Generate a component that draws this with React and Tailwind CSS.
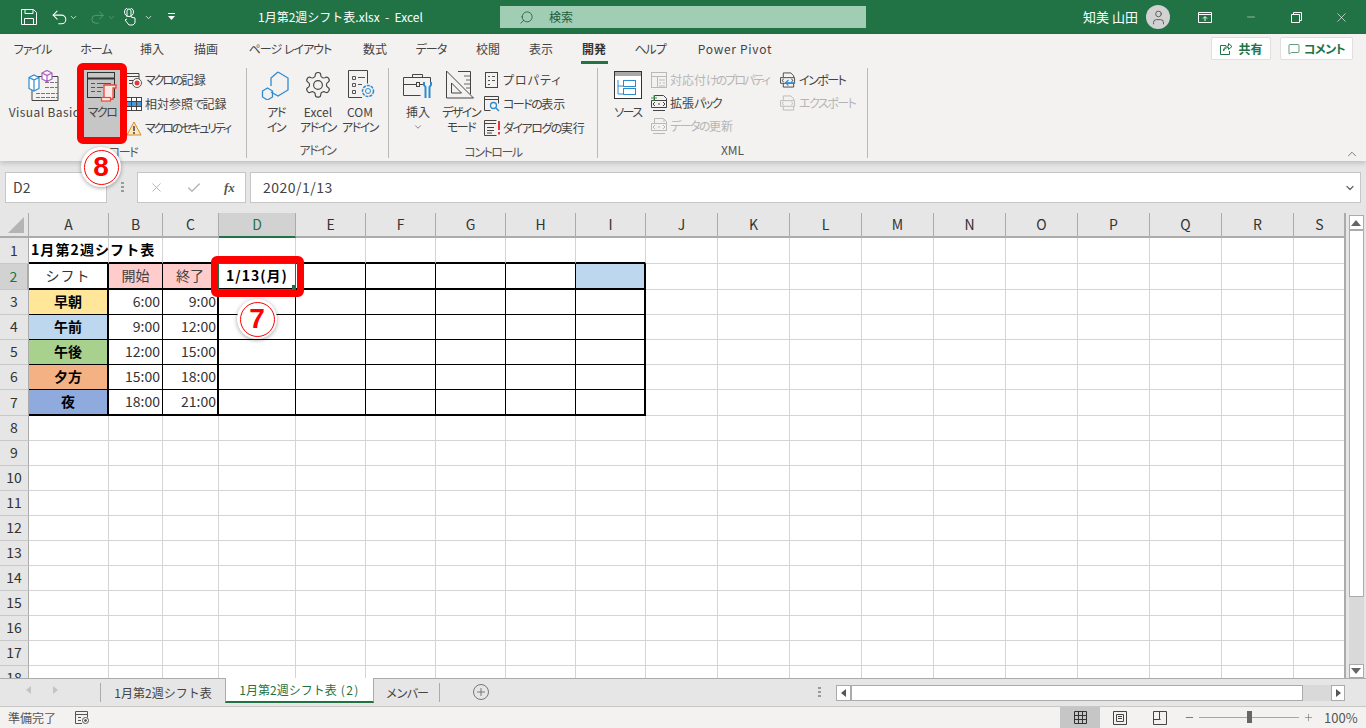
import React from 'react';
import {
  Undo2, Redo2, ChevronDown, ChevronUp, Search, X, Minus, Check, MessageSquare, Plus, User,
} from 'lucide-react';

const jp = "font-['Noto_Sans_CJK_JP','Liberation_Sans',sans-serif]";
const palt = '[font-feature-settings:"palt"]';

const tabs = [
  ['ファイル', 65], ['ホーム', 62], ['挿入', 50], ['描画', 58], ['ページ レイアウト', 110], ['数式', 60],
  ['データ', 52], ['校閲', 62], ['表示', 44], ['開発', 62], ['ヘルプ', 50], ['Power Pivot', 120],
];

const colWidths = [80, 54, 56, 77, 70, 70, 70, 70, 70, 72, 72, 72, 72, 72, 72, 72, 72, 72, 52];
const colNames = 'ABCDEFGHIJKLMNOPQRS'.split('');
const rowHeights = [26, 26, 25, 25, 25, 25, 26, 25, 25, 25, 25, 25, 25, 25, 25, 25, 25, 25];

const timeB = 'justify-end pr-[2px] text-[#333]';
const timeC = 'justify-end pr-px text-[#333]';

const rows = {
  1: { 0: { t: '1月第2週シフト表', cls: 'font-bold tracking-[1.1px] pl-[2px]' } },
  2: {
    0: { t: 'シフト', cls: 'justify-center text-[#333] tracking-[1px]' },
    1: { t: '開始', cls: 'justify-center bg-[#ffcccc] text-[#444]' },
    2: { t: '終了', cls: 'justify-center bg-[#ffcccc] text-[#444]' },
    3: { t: '1/13(月)', cls: 'justify-center font-bold tracking-[1px]' },
    8: { t: '', cls: 'bg-[#bdd7ee]' },
  },
  3: {
    0: { t: '早朝', cls: 'justify-center font-bold bg-[#ffe699]' },
    1: { t: '6:00', cls: timeB },
    2: { t: '9:00', cls: timeC },
  },
  4: {
    0: { t: '午前', cls: 'justify-center font-bold bg-[#bdd7ee]' },
    1: { t: '9:00', cls: timeB },
    2: { t: '12:00', cls: timeC },
  },
  5: {
    0: { t: '午後', cls: 'justify-center font-bold bg-[#a9d18e]' },
    1: { t: '12:00', cls: timeB },
    2: { t: '15:00', cls: timeC },
  },
  6: {
    0: { t: '夕方', cls: 'justify-center font-bold bg-[#f4b183]' },
    1: { t: '15:00', cls: timeB },
    2: { t: '18:00', cls: timeC },
  },
  7: {
    0: { t: '夜', cls: 'justify-center font-bold bg-[#8faadc]' },
    1: { t: '18:00', cls: timeB },
    2: { t: '21:00', cls: timeC },
  },
};

// borders of the table A2:I7, thick on the outside and round the header
const cellBorders = (r, c) => {
  const inTable = c <= 8;
  let right = 'border-r border-r-[#d4d4d4]';
  let bottom = 'border-b border-b-[#d4d4d4]';
  if (inTable && r >= 2 && r <= 7) {
    right = c === 0 || c === 2 || c === 8 ? 'border-r-2 border-r-black' : 'border-r border-r-black';
  }
  if (inTable && (r === 1 || r === 2 || r === 7)) bottom = 'border-b-2 border-b-black';
  else if (inTable && r >= 3 && r <= 6) bottom = 'border-b border-b-black';
  return `${right} ${bottom}`;
};

// the kana of the original UI font is narrower than Noto's
const Kana = ({ text, cls = 'tracking-[-1.5px]' }) => (
  <span>
    {text.split(/([\u3040-\u30ff]+)/).map((part, i) =>
      /[\u3040-\u30ff]/.test(part) ? <span key={i} className={cls}>{part}</span> : part,
    )}
  </span>
);

const IconVB = () => (
  <svg width="32" height="32" viewBox="0 0 32 32" fill="none">
    <path d="M9 6.500h21v24H4V19" stroke="#444" />
    <path d="M17 12.500h13M17 17.500h13M8 23.500h22M8 27.500h22" stroke="#777" strokeDasharray="4 1" />
    <path d="M1 7.500l5-2.500 5 2.500v11l-5 2.500-5-2.500zM1 7.500l5 2.500 5-2.500M6 10v10" fill="#fff" stroke="#2e8bd0" strokeWidth="1.2" />
    <path d="M14 3l5-2.500 5 2.500v6l-5 2.500-5-2.500zM14 3l5 2.500 5-2.500M19 5.500v6" fill="#fff" stroke="#a95bc0" strokeWidth="1.2" />
  </svg>
);

const IconMacro = () => (
  <svg width="31" height="30" viewBox="0 0 31 30" fill="none">
    <rect x="0.500" y="0.500" width="27" height="25" stroke="#333" />
    <path d="M1 6.500h27" stroke="#333" strokeWidth="2" />
    <path d="M4 11.500h4M10 11.500h14M4 15.500h4M10 15.500h6M4 19.500h4M10 19.500h4" stroke="#555" />
    <path d="M17 13h12v3h-3v11H17z" fill="#fbe9e7" stroke="#e8483b" strokeWidth="1.300" />
    <rect x="14.500" y="25.500" width="9" height="3.500" fill="#fbe9e7" stroke="#e8483b" strokeWidth="1.200" />
  </svg>
);

const IconRecord = () => (
  <svg width="16" height="16" viewBox="0 0 16 16" fill="none">
    <path d="M0 1.500h13v6M0 4.500h13M3 8.500h4M3 11.500h3" stroke="#444" />
    <circle cx="11" cy="11" r="4.500" fill="#fff" stroke="#555" />
    <circle cx="11" cy="11" r="2.500" fill="#e5383b" />
  </svg>
);

const IconRelative = () => (
  <svg width="16" height="14" viewBox="0 0 16 14" fill="none">
    <rect x="0.500" y="0.500" width="15" height="13" fill="#fff" stroke="#444" />
    <rect x="1" y="5" width="14" height="4" fill="#4a9bdc" />
    <path d="M5.500 0v14M10.500 0v14M0 4.500h16M0 9.500h16" stroke="#444" />
  </svg>
);

const IconWarn = () => (
  <svg width="16" height="15" viewBox="0 0 16 15">
    <path d="M8 1l7 13H1z" fill="#fce8bf" stroke="#d98c2b" />
    <path d="M8 5v5M8 11v2" stroke="#333" strokeWidth="1.400" />
  </svg>
);

const IconAddin = () => (
  <svg width="30" height="30" viewBox="0 0 30 30" fill="none" stroke="#2e8bd0" strokeWidth="1.300">
    <path d="M17 2l10 6v12l-10 6-7-4M10 16V8l7-6" />
    <path d="M6.500 18l5 3v6l-5 3-5-3v-6z" />
  </svg>
);

const IconGear = () => (
  <svg width="30" height="30" viewBox="0 0 24 24" fill="none" stroke="#444" strokeWidth="0.900">
    <path d="M12.200 2h-.400a2 2 0 0 0-2 2v.200a2 2 0 0 1-1 1.700l-.400.200a2 2 0 0 1-2 0l-.200-.100a2 2 0 0 0-2.700.700l-.200.400a2 2 0 0 0 .700 2.700l.200.100a2 2 0 0 1 1 1.700v.500a2 2 0 0 1-1 1.700l-.200.100a2 2 0 0 0-.700 2.700l.200.400a2 2 0 0 0 2.700.700l.200-.100a2 2 0 0 1 2 0l.400.200a2 2 0 0 1 1 1.700v.200a2 2 0 0 0 2 2h.400a2 2 0 0 0 2-2v-.200a2 2 0 0 1 1-1.700l.400-.200a2 2 0 0 1 2 0l.200.100a2 2 0 0 0 2.700-.700l.200-.400a2 2 0 0 0-.700-2.700l-.200-.100a2 2 0 0 1-1-1.700v-.500a2 2 0 0 1 1-1.700l.200-.100a2 2 0 0 0 .700-2.700l-.200-.400a2 2 0 0 0-2.700-.700l-.200.100a2 2 0 0 1-2 0l-.400-.200a2 2 0 0 1-1-1.700V4a2 2 0 0 0-2-2z" />
    <circle cx="12" cy="12" r="3.500" />
  </svg>
);

const IconCom = () => (
  <svg width="30" height="30" viewBox="0 0 30 30" fill="none" className="ml-[3px]">
    <path d="M15 27.500H1.500V0.500h19v13" stroke="#444" />
    <path d="M5.500 6.500h3v3h-3zM5.500 13.500h3v3h-3zM5.500 20.500h3v3h-3zM11 7.500h7M11 14.500h4" stroke="#555" />
    <circle cx="21" cy="21" r="5.500" stroke="#2e8bd0" strokeWidth="1.500" strokeDasharray="3 1" />
    <circle cx="21" cy="21" r="2.500" stroke="#2e8bd0" />
  </svg>
);

const IconInsert = () => (
  <svg width="30" height="30" viewBox="0 0 30 30" fill="none">
    <path d="M0.500 7.500h27v6M0.500 7.500v18h17M0.500 14.500h13M17 14.500h5M9.500 7.500v-3h10v3" stroke="#444" />
    <rect x="13.500" y="12.500" width="3" height="4" stroke="#444" />
    <path d="M21 11v3l1.500 2v11M28 11v3l-1.500 2v11" stroke="#2e8bd0" strokeWidth="2" transform="translate(0 1)" />
  </svg>
);

const IconDesign = () => (
  <svg width="30" height="30" viewBox="0 0 30 30" fill="none" stroke="#444">
    <path d="M0.500 1l27 27H0.500z" />
    <path d="M5.500 13l10 10h-10z" />
    <path d="M12 1.500h12.500V24" />
    <path d="M18 6h6M20 10h4M18 14h6M20 18h4" stroke="#666" />
  </svg>
);

const IconProp = () => (
  <svg width="14" height="16" viewBox="0 0 14 16" fill="none" stroke="#555">
    <rect x="0.500" y="0.500" width="12" height="15" stroke="#444" />
    <path d="M3 4.500h2M7 4.500h3M3 8.500h2M7 8.500h3M3 12.500h2" />
  </svg>
);

const IconCode = () => (
  <svg width="16" height="16" viewBox="0 0 16 16" fill="none">
    <path d="M0.500 14.500v-14h14v7M0 3.500h15M0.500 14.500h6" stroke="#444" />
    <circle cx="9.500" cy="9.500" r="3" stroke="#2e8bd0" strokeWidth="1.300" />
    <path d="M12 12l3 3" stroke="#2e8bd0" strokeWidth="1.500" />
  </svg>
);

const IconDialog = () => (
  <svg width="16" height="16" viewBox="0 0 16 16" fill="none">
    <path d="M12.500 15.500H0.500v-15h12M0 3.500h12M3 7.500h7M3 10.500h7M3 13h5" stroke="#444" />
    <path d="M15 1v9M15 12v2.500" stroke="#e5383b" strokeWidth="2" />
  </svg>
);

const IconSource = () => (
  <svg width="28" height="28" viewBox="0 0 28 28" fill="none">
    <rect x="0.500" y="0.500" width="27" height="27" fill="#fff" stroke="#333" />
    <rect x="1" y="1" width="26" height="4" fill="#a8a8a8" />
    <path d="M4 9v14h5M4 15h5" stroke="#2e8bd0" />
    <rect x="9.500" y="9.500" width="12" height="6" stroke="#2e8bd0" />
    <rect x="9.500" y="17.500" width="12" height="6" stroke="#2e8bd0" />
  </svg>
);

const IconMapProp = () => (
  <svg width="16" height="16" viewBox="0 0 16 16" fill="none" stroke="#b9b9b9">
    <rect x="0.500" y="0.500" width="15" height="15" />
    <path d="M0 4.500h16M6.500 5v11M8 8h6M8 11h2M12 11h2M8 14h6" />
  </svg>
);

const IconPack = ({ color = '#444', plus = false, alert = false }) => (
  <svg width="16" height="16" viewBox="0 0 16 16" fill="none" stroke={color}>
    <path d="M3.500 5V0.500h9l3 3v9M0.500 5.500h15v7h-15zM2 15.500h12" />
    <path d="M4 7l-2 2 2 2M12 7l2 2-2 2M7 9h2" />
    {plus && <path d="M3 0v6M0 3h6" stroke="#2f9e44" />}
    {alert && <path d="M13 1v3" />}
  </svg>
);

const IconImport = ({ color = '#444', arrow = false }) => (
  <svg width="17" height="16" viewBox="0 0 17 16" fill="none" stroke={color}>
    <path d="M3.500 5V0.500h8l3 3V5M0.500 5.500h15v6h-15zM3.500 11.500v4h11v-4" />
    <path d="M4 7l-2 1.500L4 10M12 7l2 1.500L12 10" />
    {arrow && <path d="M16 11H6M9 8l-3 3 3 3" stroke="#2e8bd0" strokeWidth="1.300" />}
  </svg>
);

const LargeButton = ({ icon, lines, width, iconTop = 2, className = '', labelCls = '', chevron = false }) => (
  <div className={`flex flex-col items-center shrink-0 ${className}`} style={{ width }}>
    <div className="h-[36px] flex items-start justify-center" style={{ paddingTop: iconTop }}>{icon}</div>
    <div className={`text-center text-[12px] leading-[15px] text-[#444] whitespace-nowrap ${labelCls}`}>
      {lines.map((l) => <div key={l}><Kana text={l} /></div>)}
    </div>
    {chevron && <ChevronDown size={10} strokeWidth={1.5} className="text-[#444] mt-[3px]" />}
  </div>
);

const SmallButton = ({ icon, label, gray, kana, h = 'h-[24px]' }) => (
  <div className={`${h} flex items-center gap-[3px] whitespace-nowrap text-[12px] ${gray ? 'text-[#b5b5b5]' : 'text-[#444]'}`}>
    <span className="w-[16px] flex justify-center shrink-0">{icon}</span>
    {typeof label === 'string' ? <Kana text={label} cls={kana} /> : label}
  </div>
);

const Group = ({ label, width, children }) => (
  <div className="flex flex-col shrink-0 border-r border-r-[#b9b9b9] h-[90px] mt-[4px]" style={{ width }}>
    <div className="flex h-[76px]">{children}</div>
    <div className="text-center text-[12px] leading-[16px] text-[#555] mt-[4px]"><Kana text={label} /></div>
  </div>
);

const Ann = ({ n, cls }) => (
  <div className={`absolute z-30 w-[40px] h-[40px] rounded-full bg-white shadow-[0_1px_4px_rgba(0,0,0,0.35)] flex items-center justify-center ${cls}`}>
    <div className="w-[35px] h-[35px] rounded-full border border-[#ff0000] flex items-center justify-center text-[#ff0000] font-black text-[28px] font-['Liberation_Sans',sans-serif]">
      {n}
    </div>
  </div>
);

const ScrollArrow = ({ dir }) => (
  <svg width="10" height="6" viewBox="0 0 10 6">
    <path d={dir === 'up' ? 'M5 0l5 6H0z' : 'M5 6L0 0h10z'} fill="#666" />
  </svg>
);

export default function App() {
  return (
    <div className={`relative w-[1366px] h-[728px] overflow-hidden bg-[#e6e6e6] flex flex-col ${jp}`}>
      {/* title bar */}
      <div className="h-[34px] bg-[#217346] flex items-center text-white shrink-0">
        <div className="w-[500px] flex items-center shrink-0 relative">
          <div className="flex items-center pl-[21px] w-[258px]">
            <svg width="16" height="16" viewBox="0 0 16 16" fill="none" stroke="#fff">
              <path d="M0.500 0.500h12l3 3v12H0.500zM4 0.500v4h8v-4M3.500 15.500v-6h9v6" />
            </svg>
            <Undo2 size={19} strokeWidth={1.3} className="ml-[13px]" />
            <ChevronDown size={9} />
            <Redo2 size={17} strokeWidth={1.3} className="ml-[11px] text-[#5d9c7c]" />
            <ChevronDown size={9} className="ml-[1px] text-[#5d9c7c]" />
            <svg width="14" height="18" viewBox="0 0 14 18" fill="none" stroke="#fff" className="ml-[7px]">
              <path d="M4 9V3a2 2 0 0 1 4 0v6l4 1v5l-2 2H6L2 12l2-1" />
              <circle cx="6" cy="4" r="4.500" />
            </svg>
            <ChevronDown size={9} className="ml-[7px]" />
            <svg width="9" height="8" viewBox="0 0 9 8" className="ml-[14px]" fill="#fff">
              <path d="M1 0h7v1H1zM1 3h7L4.500 7z" />
            </svg>
          </div>
          <div className="text-[12px] whitespace-nowrap">1月第2週シフト表.xlsx&nbsp; -&nbsp; Excel</div>
        </div>
        <div className="w-[366px] h-[22px] bg-[#a0cdb4] flex items-center text-[#1f5c3a] text-[12px] shrink-0">
          <Search size={15} strokeWidth={1.3} className="ml-[19px] -scale-x-100" />
          <span className="ml-[15px]">検索</span>
        </div>
        <div className="flex-1 flex items-center pl-[217px]">
          <span className="text-[13px] whitespace-nowrap w-[63px]">知美 山田</span>
          <div className="w-[24px] h-[24px] rounded-full bg-[#d2d2d2] flex items-center justify-center">
            <User size={17} strokeWidth={1.3} className="text-[#555]" />
          </div>
          <svg width="14" height="11" viewBox="0 0 14 11" fill="none" stroke="#fff" className="ml-[28px]">
            <path d="M0.500 0.500h13v10h-13zM0 2.500h14M7 9V5M5 6.500l2-2 2 2" />
          </svg>
          <Minus size={12} strokeWidth={1} className="ml-[33px]" />
          <svg width="11" height="11" viewBox="0 0 11 11" fill="none" stroke="#fff" className="ml-[34px]">
            <path d="M0.500 2.500h8v8h-8zM2.500 2.500v-2h8v8h-2" />
          </svg>
          <X size={15} strokeWidth={1} className="ml-[32px]" />
        </div>
      </div>

      {/* ribbon */}
      <div className={`h-[127px] bg-[#f3f2f1] shrink-0 shadow-[0_2px_5px_rgba(0,0,0,0.18)] z-10 relative ${palt}`}>
        <div className="h-[30px] flex items-center">
          {tabs.map(([name, w]) => (
            <div
              key={name}
              className={`h-[30px] flex items-center justify-center text-[12px] whitespace-nowrap relative shrink-0 ${name === '開発' ? 'font-bold text-[#333]' : 'text-[#444]'} ${name === 'Power Pivot' ? 'tracking-[0.7px]' : ''}`}
              style={{ width: w }}
            >
              <Kana text={name} cls="tracking-[-1px]" />
              {name === '開発' && <span className="absolute bottom-0 left-[18px] w-[27px] h-[3px] bg-[#217346]" />}
            </div>
          ))}
          <div className="ml-auto flex items-center gap-[9px] pr-[13px] -mt-[1px]">
            <div className="w-[60px] h-[23px] bg-white border border-[#e1dfdd] rounded-[2px] flex items-center justify-center gap-[5px] text-[#217346] text-[12px] font-bold">
              <svg width="14" height="14" viewBox="0 0 14 14" fill="none" stroke="#217346">
                <path d="M7 3.500H1.500v9h9V9" />
                <path d="M4.500 9c0-3 2-5 5-5V1.500l3.500 3-3.500 3V5.500c-2 0-4 1-5 3.500z" />
              </svg>
              共有
            </div>
            <div className="w-[73px] h-[23px] bg-white border border-[#e1dfdd] rounded-[2px] flex items-center justify-center gap-[4px] text-[#217346] text-[12px] font-bold">
              <MessageSquare size={12} strokeWidth={1.4} /><Kana text="コメント" cls="tracking-[-0.5px]" />
            </div>
          </div>
        </div>
        <div className="flex">
          <Group label="コード" width={247}>
            <LargeButton icon={<IconVB />} lines={['Visual Basic']} width={78} className="ml-[5px]" labelCls="tracking-[0.4px]" />
            <div className="w-[36px] h-[70px] bg-[#c6c6c6] ml-[1px] shrink-0">
              <LargeButton icon={<IconMacro />} lines={['マクロ']} width={36} iconTop={4} />
            </div>
            <div className="ml-[6px]">
              <SmallButton icon={<IconRecord />} label="マクロの記録" kana="tracking-[-2px]" />
              <SmallButton icon={<IconRelative />} label="相対参照で記録" />
              <SmallButton icon={<IconWarn />} label="マクロのセキュリティ" kana="tracking-[-2.200px]" />
            </div>
          </Group>
          <Group label="アドイン" width={142}>
            <LargeButton icon={<IconAddin />} lines={['アド', 'イン']} width={42} className="ml-[8px]" />
            <LargeButton icon={<IconGear />} lines={['Excel', 'アドイン']} width={42} />
            <LargeButton icon={<IconCom />} lines={['COM', 'アドイン']} width={42} />
          </Group>
          <Group label="コントロール" width={209}>
            <LargeButton icon={<IconInsert />} lines={['挿入']} width={44} className="ml-[7px]" chevron />
            <LargeButton icon={<IconDesign />} lines={['デザイン', 'モード']} width={42} />
            <div className="ml-[2px]">
              <SmallButton icon={<IconProp />} label={<span className="tracking-[1px]">プロパティ</span>} />
              <SmallButton icon={<IconCode />} label="コードの表示" />
              <SmallButton icon={<IconDialog />} label="ダイアログの実行" />
            </div>
          </Group>
          <Group label="XML" width={270}>
            <LargeButton icon={<IconSource />} lines={['ソース']} width={44} className="ml-[8px]" iconTop={3} />
            <div className="ml-[1px] w-[129px]">
              <SmallButton h="h-[23px]" gray icon={<IconMapProp />} label="対応付けのプロパティ" kana="tracking-[-2px]" />
              <SmallButton h="h-[23px]" icon={<IconPack plus />} label="拡張パック" />
              <SmallButton h="h-[23px]" gray icon={<IconPack color="#b9b9b9" alert />} label="データの更新" />
            </div>
            <div>
              <SmallButton h="h-[23px]" icon={<IconImport arrow />} label="インポート" />
              <SmallButton h="h-[23px]" gray icon={<IconImport color="#b9b9b9" />} label="エクスポート" />
            </div>
          </Group>
        </div>
        <ChevronUp size={14} strokeWidth={1.3} className="absolute right-[7px] bottom-0 text-[#555]" />
      </div>

      {/* formula bar */}
      <div className="h-[52px] shrink-0 flex items-center pl-[5px] pr-[5px] pt-[1px]">
        <div className="w-[102px] h-[31px] bg-white border border-[#c6c6c6] flex items-center pl-[7px] text-[14px] text-[#444]">D2</div>
        <div className="w-[30px] flex justify-center">
          <svg width="3" height="11" viewBox="0 0 3 11" fill="#999"><path d="M0 0h3v2H0zM0 4h3v2H0zM0 8h3v2H0z" /></svg>
        </div>
        <div className="w-[109px] h-[31px] bg-white border border-[#c6c6c6] flex items-center text-[#b4b4b4]">
          <X size={15} strokeWidth={1.5} className="ml-[11px]" />
          <Check size={16} strokeWidth={2} className="ml-[22px]" />
          <span className="ml-[22px] text-[13px] italic font-bold text-[#555] font-['Liberation_Serif',serif]">fx</span>
        </div>
        <div className="ml-[4px] flex-1 h-[31px] bg-white border border-[#c6c6c6] flex items-center pl-[12px] pr-[4px] text-[14px] text-[#444]">
          <span className="flex-1 tracking-[0.5px]">2020/1/13</span>
          <ChevronDown size={12} strokeWidth={2.5} className="text-[#666]" />
        </div>
      </div>

      {/* sheet */}
      <div className="flex-1 min-h-0 flex text-[14px] text-black">
        <div className="w-[1346px] shrink-0 border-r-2 border-r-[#ababab] overflow-hidden">
          <div className="h-[25px] flex border-b-2 border-b-[#ababab]">
            <div className="w-[29px] shrink-0 border-r border-r-[#ababab] relative">
              <svg width="18" height="18" viewBox="0 0 18 18" className="absolute right-[3px] bottom-[2px]"><path d="M17 1v16H1z" fill="#b4b4b4" /></svg>
            </div>
            {colNames.map((c, i) => (
              <div
                key={c}
                className={`shrink-0 flex items-center justify-center border-r border-r-[#ababab] ${c === 'D' ? 'bg-[#d2d2d2] text-[#217346] border-b-2 border-b-[#217346] -mb-[2px]' : 'text-[#333]'}`}
                style={{ width: colWidths[i] }}
              >
                {c}
              </div>
            ))}
          </div>
          {rowHeights.map((h, idx) => {
            const r = idx + 1;
            return (
              <div key={r} className="flex bg-white" style={{ height: h }}>
                <div className={`w-[29px] shrink-0 flex items-center justify-center pb-px border-b border-b-[#c8c8c8] border-r border-r-[#ababab] ${r === 2 ? 'bg-[#d2d2d2] text-[#217346] border-r-2 border-r-[#217346]' : 'bg-[#e6e6e6] text-[#333]'}`}>
                  {r}
                </div>
                {colNames.map((c, i) => {
                  const cell = rows[r]?.[i];
                  return (
                    <div
                      key={c}
                      className={`shrink-0 box-border flex items-center pb-[2px] whitespace-nowrap ${cellBorders(r, i)} ${cell?.cls ?? ''}`}
                      style={{ width: colWidths[i] }}
                    >
                      {cell?.t}
                    </div>
                  );
                })}
              </div>
            );
          })}
        </div>
        <div className="w-[20px] flex flex-col items-center pt-[2px] bg-[#e6e6e6]">
          <div className="w-[15px] h-[15px] bg-white border border-[#ababab] flex items-center justify-center"><ScrollArrow dir="up" /></div>
          <div className="w-[15px] h-[367px] bg-white border border-[#ababab]" />
          <div className="w-[15px] h-[67px] bg-[#d9d9d9]" />
          <div className="w-[15px] h-[14px] bg-white border border-[#ababab] flex items-center justify-center"><ScrollArrow dir="down" /></div>
        </div>
      </div>

      {/* sheet tabs */}
      <div className="h-[28px] shrink-0 bg-[#e6e6e6] border-t border-t-[#ababab] flex items-start text-[12px] text-[#444] -mt-px relative z-[1]">
        <div className="w-[100px] h-[20px] mt-[1px] flex items-center pl-[26px] gap-[22px] text-[#c4c4c4] shrink-0">
          <svg width="5" height="8" viewBox="0 0 5 8" fill="currentColor"><path d="M5 0v8L0 4z" /></svg>
          <svg width="5" height="8" viewBox="0 0 5 8" fill="currentColor"><path d="M0 0v8l5-4z" /></svg>
        </div>
        <div className="w-[125px] h-[19px] mt-[4px] flex items-center justify-center border-l border-l-[#ababab] shrink-0 whitespace-nowrap">1月第2週シフト表</div>
        <div className="w-[149px] h-[25px] -mt-px bg-white border-x border-x-[#ababab] border-b-2 border-b-[#217346] text-[#217346] flex items-center justify-center shrink-0 whitespace-nowrap">
          1月第2週シフト表<span className="ml-[4px] tracking-[1.4px]">(2)</span>
        </div>
        <div className="w-[66px] h-[19px] mt-[4px] flex items-center justify-center border-r border-r-[#ababab] shrink-0 tracking-[-1.5px]">メンバー</div>
        <div className="ml-[33px] mt-[5px] w-[16px] h-[16px] rounded-full border border-[#777] flex items-center justify-center text-[#777] shrink-0">
          <Plus size={12} strokeWidth={2} />
        </div>
        <div className="ml-[329px] mt-[8px] shrink-0">
          <svg width="3" height="11" viewBox="0 0 3 11" fill="#999"><path d="M0 0h3v2H0zM0 4h3v2H0zM0 8h3v2H0z" /></svg>
        </div>
        <div className="ml-[15px] mt-[6px] w-[509px] h-[16px] flex shrink-0">
          <div className="w-[15px] bg-white border border-[#ababab] flex items-center justify-center shrink-0">
            <svg width="5" height="8" viewBox="0 0 5 8" fill="#555"><path d="M5 0v8L0 4z" /></svg>
          </div>
          <div className="w-[452px] bg-white border border-[#ababab] shrink-0" />
          <div className="flex-1 bg-[#d9d9d9]" />
          <div className="w-[14px] bg-white border border-[#ababab] flex items-center justify-center shrink-0">
            <svg width="5" height="8" viewBox="0 0 5 8" fill="#555"><path d="M0 0v8l5-4z" /></svg>
          </div>
        </div>
      </div>

      {/* status bar */}
      <div className="h-[22px] shrink-0 bg-[#f3f2f1] border-t border-t-[#c8c8c8] flex items-center text-[12px] text-[#555]">
        <span className="ml-[8px] w-[67px]">準備完了</span>
        <svg width="14" height="13" viewBox="0 0 14 13" fill="none" stroke="#555">
          <path d="M7 12.500H0.500v-12h12v6M0 3.500h12M3 6.500h3M3 9.500h3" />
          <circle cx="10.500" cy="9.500" r="3" fill="#fff" />
          <circle cx="10.500" cy="9.500" r="1" fill="#555" />
        </svg>
        <div className="ml-[971px] w-[40px] h-full bg-[#c6c6c6] flex items-center justify-center">
          <svg width="13" height="13" viewBox="0 0 13 13" fill="none" stroke="#333"><path d="M0.500 0.500h12v12h-12zM4.500 0v13M8.500 0v13M0 4.500h13M0 8.500h13" /></svg>
        </div>
        <div className="w-[40px] flex justify-center">
          <svg width="14" height="14" viewBox="0 0 14 14" fill="none" stroke="#444"><path d="M0.500 0.500h13v13h-13zM3.500 3.500h7v7h-7zM5 5.500h4M5 7.500h4" /></svg>
        </div>
        <div className="w-[40px] flex justify-center">
          <svg width="14" height="14" viewBox="0 0 14 14" fill="none" stroke="#444"><path d="M0.500 0.500h13v13h-13zM0.500 8.500h6v-8M6.500 8.500h1" /></svg>
        </div>
        <Minus size={11} strokeWidth={1.5} className="ml-[4px] text-[#444]" />
        <div className="ml-[4px] w-[100px] h-px bg-[#a6a6a6] relative">
          <div className="absolute left-[48px] -top-[6px] w-[5px] h-[12px] bg-[#666]" />
        </div>
        <Plus size={11} strokeWidth={1} className="ml-[4px] text-[#444]" />
        <span className="ml-[10px] text-[13px]">100%</span>
      </div>

      {/* annotations over the page */}
      <div className="absolute z-20 left-[77px] top-[63px] w-[50px] h-[81px] rounded-[6px] border-[7px] border-[#ff0000]" />
      <div className="absolute z-20 left-[218px] top-[263px] w-[78px] h-[27px] border border-[#217346]" />
      <div className="absolute z-20 left-[292px] top-[285px] w-[4px] h-[4px] bg-[#217346]" />
      <div className="absolute z-20 left-[211px] top-[256px] w-[93px] h-[41px] rounded-[6px] border-[7px] border-[#ff0000]" />
      <Ann n="8" cls="left-[81px] top-[147px]" />
      <Ann n="7" cls="left-[237px] top-[299px]" />
    </div>
  );
}
